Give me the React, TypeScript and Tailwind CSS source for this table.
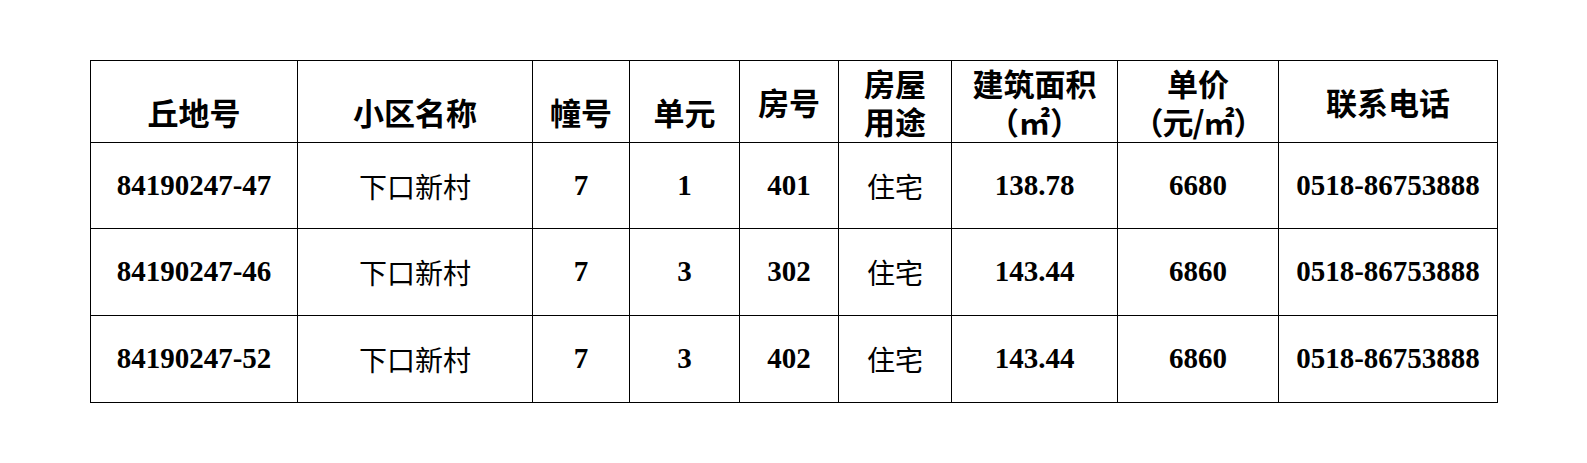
import React from 'react'

// 表头 + 三行房源数据
const rows = [
  { lot: '84190247-47', name: '下口新村', bldg: '7', unit: '1', room: '401', use: '住宅', area: '138.78', price: '6680', tel: '0518-86753888' },
  { lot: '84190247-46', name: '下口新村', bldg: '7', unit: '3', room: '302', use: '住宅', area: '143.44', price: '6860', tel: '0518-86753888' },
  { lot: '84190247-52', name: '下口新村', bldg: '7', unit: '3', room: '402', use: '住宅', area: '143.44', price: '6860', tel: '0518-86753888' },
]

const cjkBold = "font-['Noto_Sans_CJK_SC',sans-serif] font-bold"
const num = "font-['Liberation_Serif','Times_New_Roman',serif] font-bold text-[29px]"
const cjkText = "font-['Noto_Sans_CJK_SC',sans-serif] font-normal text-[28px]"
const cell = 'border-[1.5px] border-black text-center align-middle p-0 text-black'

export default function App() {
  return (
    <div className="min-h-[463px] w-[1587px] bg-white pl-[90px] pt-[60px]">
      <table className="w-[1407px] table-fixed border-collapse">
        <colgroup>
          <col className="w-[207px]" />
          <col className="w-[235px]" />
          <col className="w-[97px]" />
          <col className="w-[110px]" />
          <col className="w-[99px]" />
          <col className="w-[113px]" />
          <col className="w-[166px]" />
          <col className="w-[161px]" />
          <col className="w-[219px]" />
        </colgroup>
        <thead>
          <tr className={`h-[82px] text-[31px] leading-[38px] ${cjkBold}`}>
            <th className={`${cell} pt-[20px] font-bold`}>丘地号</th>
            <th className={`${cell} pt-[20px] font-bold`}>小区名称</th>
            <th className={`${cell} pt-[20px] font-bold`}>幢号</th>
            <th className={`${cell} pt-[20px] font-bold`}>单元</th>
            <th className={`${cell} font-bold`}>房号</th>
            <th className={`${cell} font-bold`}>
              房屋
              <br />
              用途
            </th>
            <th className={`${cell} font-bold`}>
              建筑面积
              <br />
              <span>（㎡）</span>
            </th>
            <th className={`${cell} font-bold`}>
              单价
              <br />
              <span className="tracking-[-1px]">（元/㎡）</span>
            </th>
            <th className={`${cell} font-bold`}>联系电话</th>
          </tr>
        </thead>
        <tbody>
          {rows.map((r, i) => (
            <tr key={r.lot} className={i === 0 ? 'h-[86px]' : 'h-[87px]'}>
              <td className={`${cell} ${num}`}>{r.lot}</td>
              <td className={`${cell} ${cjkText}`}>{r.name}</td>
              <td className={`${cell} ${num}`}>{r.bldg}</td>
              <td className={`${cell} ${num}`}>{r.unit}</td>
              <td className={`${cell} ${num}`}>{r.room}</td>
              <td className={`${cell} ${cjkText}`}>{r.use}</td>
              <td className={`${cell} ${num}`}>{r.area}</td>
              <td className={`${cell} ${num}`}>{r.price}</td>
              <td className={`${cell} ${num}`}>{r.tel}</td>
            </tr>
          ))}
        </tbody>
      </table>
    </div>
  )
}
